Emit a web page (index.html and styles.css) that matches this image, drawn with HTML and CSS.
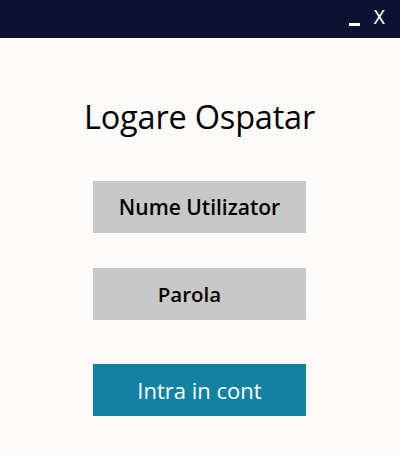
FILE: index.html
```html
<!DOCTYPE html>
<html>
<head>
<meta charset="utf-8">
<link rel="stylesheet" href="styles.css">
</head>
<body>
<div class="titlebar">
  <span class="minimize"></span>
  <span class="close">X</span>
</div>
<main class="content">
  <h1 class="title">Logare Ospatar</h1>
  <div class="field">Nume Utilizator</div>
  <div class="field second"><span class="shift">Parola</span></div>
  <button class="login">Intra in cont</button>
</main>
</body>
</html>
```
FILE: styles.css
```css
* { box-sizing: border-box; }
html, body { margin: 0; padding: 0; }
body {
  width: 400px;
  height: 455px;
  background: #fcfbf9;
  font-family: "Open Sans", "Noto Sans", sans-serif;
  overflow: hidden;
}
.titlebar {
  height: 38px;
  background: #0b1130;
  display: flex;
  justify-content: flex-end;
  align-items: flex-start;
  padding-right: 15px;
  gap: 14px;
}
.minimize {
  width: 11px;
  height: 3px;
  background: #fff;
  margin-top: 23px;
}
.close {
  color: #fff;
  font-family: "Noto Sans", sans-serif;
  font-size: 19px;
  line-height: 1;
  margin-top: 8px;
}
.content {
  width: 399px;
  display: flex;
  flex-direction: column;
  align-items: center;
}
.title {
  margin: 57px 0 0 0;
  font-weight: 400;
  font-size: 32.5px;
  line-height: 44px;
  color: #000;
  letter-spacing: -0.2px;
}
.field {
  width: 213px;
  height: 52px;
  background: #c8c8c8;
  display: flex;
  align-items: center;
  justify-content: center;
  font-size: 21px;
  font-weight: 600;
  color: #000;
  margin-top: 42px;
}
.field.second { margin-top: 35px; font-size: 20.5px; }
.shift { margin-right: 20px; }
.login {
  width: 213px;
  height: 52px;
  border: none;
  background: #1282a2;
  color: #fff;
  font-family: inherit;
  font-size: 22px;
  margin-top: 44px;
  padding: 0;
}
```
